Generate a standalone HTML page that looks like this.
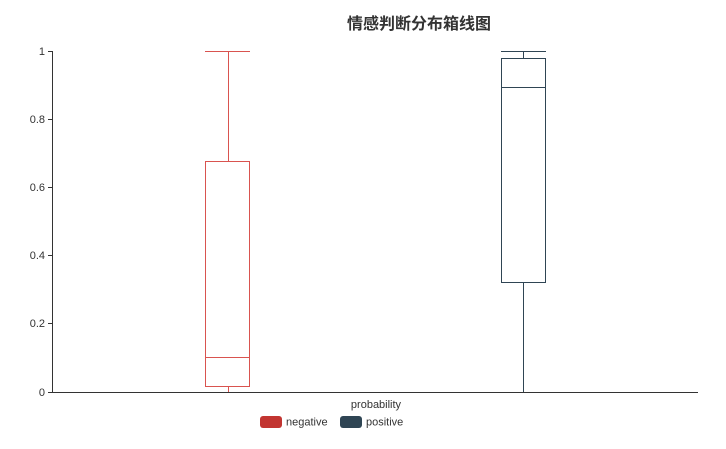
<!DOCTYPE html>
<html><head><meta charset="utf-8"><style>
body{margin:0;background:#fff;width:726px;height:444px;overflow:hidden}
svg text{font-family:"Liberation Sans","Noto Sans CJK SC",sans-serif}
</style></head><body>
<svg width="726" height="444" xmlns="http://www.w3.org/2000/svg">
<text x="419" y="29" text-anchor="middle" font-size="16" font-weight="bold" fill="#333">情感判断分布箱线图</text>
<g stroke="#333" stroke-width="1" fill="none">
<line x1="52.5" y1="51" x2="52.5" y2="392"/>
<line x1="52" y1="392.5" x2="698" y2="392.5"/>
<line x1="48" y1="51.5" x2="52" y2="51.5"/>
<line x1="48" y1="119.5" x2="52" y2="119.5"/>
<line x1="48" y1="187.5" x2="52" y2="187.5"/>
<line x1="48" y1="255.5" x2="52" y2="255.5"/>
<line x1="48" y1="323.5" x2="52" y2="323.5"/>
<line x1="48" y1="392.5" x2="52" y2="392.5"/>
</g>
<g font-size="11" fill="#333" text-anchor="end">
<text x="45" y="55">1</text><text x="45" y="123">0.8</text><text x="45" y="191">0.6</text>
<text x="45" y="259">0.4</text><text x="45" y="327">0.2</text><text x="45" y="396">0</text>
</g>
<g stroke="#d9534f" fill="none">
<line x1="205" y1="51.5" x2="250" y2="51.5"/>
<line x1="228.5" y1="51" x2="228.5" y2="161"/>
<rect x="205.5" y="161.5" width="44" height="225"/>
<line x1="205" y1="357.5" x2="250" y2="357.5"/>
<line x1="228.5" y1="386" x2="228.5" y2="392"/>
</g>
<g stroke="#2f4554" fill="none">
<line x1="501" y1="51.5" x2="546" y2="51.5"/>
<line x1="523.5" y1="51" x2="523.5" y2="58"/>
<rect x="501.5" y="58.5" width="44" height="224"/>
<line x1="501" y1="87.5" x2="546" y2="87.5"/>
<line x1="523.5" y1="283" x2="523.5" y2="392"/>
</g>
<text x="376" y="408" text-anchor="middle" font-size="11" fill="#333">probability</text>
<rect x="260" y="416" width="22" height="12" rx="3" fill="#c23531"/>
<text x="286" y="425.5" font-size="11" fill="#333">negative</text>
<rect x="340" y="416" width="22" height="12" rx="3" fill="#2f4554"/>
<text x="366" y="425.5" font-size="11" fill="#333">positive</text>
</svg>
</body></html>
